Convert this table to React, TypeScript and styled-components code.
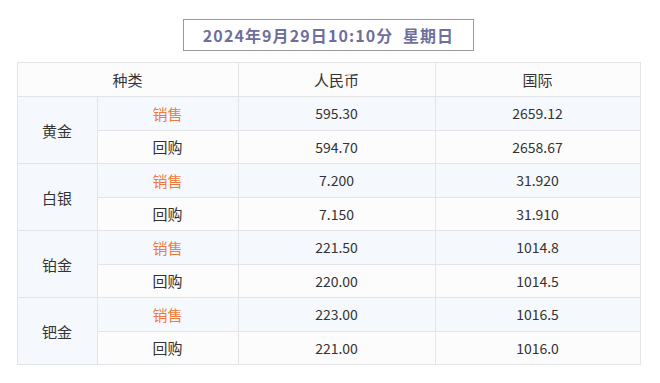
import React from 'react';
import styled, { createGlobalStyle } from 'styled-components';

const GlobalStyle = createGlobalStyle`
  body {
    margin: 0;
    background: #ffffff;
    font-family: "Noto Sans CJK SC", "Noto Sans", sans-serif;
  }
`;

const Page = styled.div`
  width: 660px;
  padding: 19px 0 0 17px;
  box-sizing: border-box;
`;

const Wrapper = styled.div`
  width: 623px;
  display: flex;
  flex-direction: column;
  align-items: center;
  gap: 11px;
`;

const TitleBox = styled.div`
  width: 291px;
  height: 32px;
  box-sizing: border-box;
  border: 1px solid #9a9a9a;
  display: flex;
  align-items: center;
  justify-content: center;
  color: #6f6f9c;
  font-size: 16px;
  line-height: 1;
  font-weight: 700;
  letter-spacing: 1.1px;
  white-space: pre;
`;

const Table = styled.table`
  width: 623px;
  border-collapse: collapse;
  table-layout: fixed;
  font-size: 15px;
  line-height: 1;
  color: #333333;
`;

const Cell = styled.td<{ $bg?: string; $orange?: boolean; $num?: boolean }>`
  border: 1px solid #e2e4e8;
  height: 32.5px;
  padding: 0;
  text-align: center;
  vertical-align: middle;
  font-size: ${(p) => (p.$num ? '14px' : '15px')};
  background: ${(p) => p.$bg || '#fcfcfc'};
  color: ${(p) => (p.$orange ? '#f07a3c' : '#333333')};
`;

const HeadCell = styled.th`
  border: 1px solid #e2e4e8;
  height: 33px;
  padding: 0;
  font-weight: 400;
  text-align: center;
  background: #fcfcfc;
`;

const SALE_BG = '#f5f9fe';
const TYPE_BG = '#f5f9fd';

const metals = [
  { name: '黄金', sell: ['595.30', '2659.12'], buy: ['594.70', '2658.67'] },
  { name: '白银', sell: ['7.200', '31.920'], buy: ['7.150', '31.910'] },
  { name: '铂金', sell: ['221.50', '1014.8'], buy: ['220.00', '1014.5'] },
  { name: '钯金', sell: ['223.00', '1016.5'], buy: ['221.00', '1016.0'] },
];

export default function App() {
  return (
    <Page>
      <GlobalStyle />
      <Wrapper>
        <TitleBox>{'2024年9月29日10:10分  星期日'}</TitleBox>
        <Table>
          <colgroup>
            <col style={{ width: 80 }} />
            <col style={{ width: 141 }} />
            <col style={{ width: 197 }} />
            <col style={{ width: 205 }} />
          </colgroup>
          <thead>
            <tr>
              <HeadCell colSpan={2}>种类</HeadCell>
              <HeadCell>人民币</HeadCell>
              <HeadCell>国际</HeadCell>
            </tr>
          </thead>
          <tbody>
            {metals.map((m) => (
              <React.Fragment key={m.name}>
                <tr>
                  <Cell rowSpan={2} $bg={TYPE_BG}>{m.name}</Cell>
                  <Cell $bg={SALE_BG} $orange>销售</Cell>
                  <Cell $bg={SALE_BG} $num>{m.sell[0]}</Cell>
                  <Cell $bg={SALE_BG} $num>{m.sell[1]}</Cell>
                </tr>
                <tr>
                  <Cell>回购</Cell>
                  <Cell $num>{m.buy[0]}</Cell>
                  <Cell $num>{m.buy[1]}</Cell>
                </tr>
              </React.Fragment>
            ))}
          </tbody>
        </Table>
      </Wrapper>
    </Page>
  );
}
